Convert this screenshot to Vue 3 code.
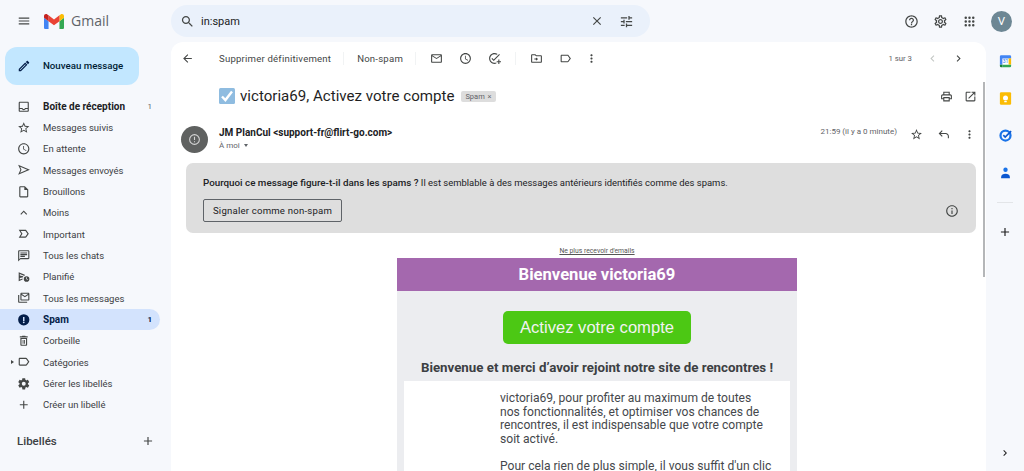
<script setup>
const icons = {
  inbox: 'M19 3H5c-1.1 0-2 .9-2 2v14c0 1.1.9 2 2 2h14c1.1 0 2-.9 2-2V5c0-1.1-.9-2-2-2zm0 16H5v-3h3.56c.69 1.19 1.97 2 3.45 2s2.75-.81 3.45-2H19v3zm0-5h-4.99c0 1.1-.9 2-2 2s-2-.9-2-2H5V5h14v9z',
  star: 'M22 9.24l-7.19-.62L12 2 9.19 8.63 2 9.24l5.46 4.73L5.82 21 12 17.27 18.18 21l-1.63-7.03L22 9.24zM12 15.4l-3.76 2.27 1-4.28-3.32-2.88 4.38-.38L12 6.1l1.71 4.04 4.38.38-3.32 2.88 1 4.28L12 15.4z',
  clock: 'M11.99 2C6.47 2 2 6.48 2 12s4.47 10 9.99 10C17.52 22 22 17.52 22 12S17.52 2 11.99 2zM12 20c-4.42 0-8-3.58-8-8s3.58-8 8-8 8 3.58 8 8-3.58 8-8 8zm.5-13H11v6l5.25 3.15.75-1.23-4.5-2.67z',
  send: 'M2 3l21 9-21 9 4-9zM5.6 6.600L8 12l-2.400 5.400L18 12z',
  draft: 'M14 2H6c-1.1 0-2 .9-2 2v16c0 1.1.9 2 2 2h12c1.1 0 2-.9 2-2V8l-6-6zm4 18H6V4h7v5h5v11z',
  less: 'M7.41 15.41L12 10.83l4.59 4.58L18 14l-6-6-6 6z',
  important: 'M15 19H3l4.5-7L3 5h12c.65 0 1.26.31 1.63.84L21 12l-4.37 6.16c-.37.52-.98.84-1.63.84zm-8.39-2H15l3.55-5L15 7H6.61l3.2 5-3.2 5z',
  chat: 'M20 2H4c-1.1 0-2 .9-2 2v18l4-4h14c1.1 0 2-.9 2-2V4c0-1.1-.9-2-2-2zm0 14H6l-2 2V4h16v12zM6 12h8v2H6zm0-3h12v2H6zm0-3h12v2H6z',
  scheduled: 'M3 4l11 4.6-.9 1.9L5 7.1v2.7l6 1.4v1.6l-6 1.4v2.7l5-2v2.1L3 20zM17 11a5 5 0 1 0 0 10 5 5 0 0 0 0-10zm-.6 2h1.2v2.6l1.8 1.1-.6 1-2.4-1.5z',
  all: 'M20 3H8c-1.1 0-2 .9-2 2v10c0 1.1.9 2 2 2h12c1.1 0 2-.9 2-2V5c0-1.1-.9-2-2-2zm0 12H8V7l6 4 6-4zm-6-6L8 5h12zM4 7H2v12c0 1.1.9 2 2 2h14v-2H4z',
  spam: 'M12 2a10 10 0 1 0 0 20 10 10 0 0 0 0-20zm-1.3 5h2.6v7h-2.6zm1.3 11.2a1.6 1.6 0 1 1 0-3.2 1.6 1.6 0 0 1 0 3.2z',
  trash: 'M6 19c0 1.1.9 2 2 2h8c1.1 0 2-.9 2-2V7H6v12zM8 9h8v10H8V9zm2 1.5h1.5v7H10zm2.5 0H14v7h-1.5zM15.5 4l-1-1h-5l-1 1H5v2h14V4z',
  label: 'M17.63 5.84C17.27 5.33 16.67 5 16 5L5 5.01C3.9 5.01 3 5.9 3 7v10c0 1.1.9 1.99 2 1.99L16 19c.67 0 1.27-.33 1.63-.84L22 12l-4.37-6.16zM16 17H5V7h11l3.55 5L16 17z',
  gear: 'M19.43 12.98c.04-.32.07-.64.07-.98 0-.34-.03-.66-.07-.98l2.11-1.65c.19-.15.24-.42.12-.64l-2-3.46c-.09-.16-.26-.25-.44-.25-.06 0-.12.01-.17.03l-2.49 1c-.52-.4-1.08-.73-1.69-.98l-.38-2.65C14.46 2.18 14.25 2 14 2h-4c-.25 0-.46.18-.49.42l-.38 2.65c-.61.25-1.17.59-1.69.98l-2.49-1c-.06-.02-.12-.03-.18-.03-.17 0-.34.09-.43.25l-2 3.46c-.13.22-.07.49.12.64l2.11 1.65c-.04.32-.07.65-.07.98 0 .33.03.66.07.98l-2.11 1.65c-.19.15-.24.42-.12.64l2 3.46c.09.16.26.25.44.25.06 0 .12-.01.17-.03l2.49-1c.52.4 1.08.73 1.69.98l.38 2.65c.03.24.24.42.49.42h4c.25 0 .46-.18.49-.42l.38-2.65c.61-.25 1.17-.59 1.69-.98l2.49 1c.06.02.12.03.18.03.17 0 .34-.09.43-.25l2-3.46c.12-.22.07-.49-.12-.64l-2.11-1.65zm-1.98-1.71c.04.31.05.52.05.73 0 .21-.02.43-.05.73l-.14 1.13.89.7 1.08.84-.7 1.21-1.27-.51-1.04-.42-.9.68c-.43.32-.84.56-1.25.73l-1.06.43-.16 1.13-.2 1.35h-1.4l-.19-1.35-.16-1.13-1.06-.43c-.43-.18-.83-.41-1.23-.71l-.91-.7-1.06.43-1.27.51-.7-1.21 1.08-.84.89-.7-.14-1.13c-.03-.31-.05-.54-.05-.74s.02-.43.05-.73l.14-1.13-.89-.7-1.08-.84.7-1.21 1.27.51 1.04.42.9-.68c.43-.32.84-.56 1.25-.73l1.06-.43.16-1.13.2-1.35h1.39l.19 1.35.16 1.13 1.06.43c.43.18.83.41 1.23.71l.91.7 1.06-.43 1.27-.51.7 1.21-1.07.85-.89.7.14 1.13zM12 8c-2.21 0-4 1.79-4 4s1.79 4 4 4 4-1.79 4-4-1.79-4-4-4zm0 6c-1.1 0-2-.9-2-2s.9-2 2-2 2 .9 2 2-.9 2-2 2z',
  gearBold: 'M19.43 12.98c.04-.32.07-.64.07-.98 0-.34-.03-.66-.07-.98l2.11-1.65c.19-.15.24-.42.12-.64l-2-3.46c-.09-.16-.26-.25-.44-.25-.06 0-.12.01-.17.03l-2.49 1c-.52-.4-1.08-.73-1.69-.98l-.38-2.65C14.46 2.18 14.25 2 14 2h-4c-.25 0-.46.18-.49.42l-.38 2.65c-.61.25-1.17.59-1.69.98l-2.49-1c-.06-.02-.12-.03-.18-.03-.17 0-.34.09-.43.25l-2 3.46c-.13.22-.07.49.12.64l2.11 1.65c-.04.32-.07.65-.07.98 0 .33.03.66.07.98l-2.11 1.65c-.19.15-.24.42-.12.64l2 3.46c.09.16.26.25.44.25.06 0 .12-.01.17-.03l2.49-1c.52.4 1.08.73 1.69.98l.38 2.65c.03.24.24.42.49.42h4c.25 0 .46-.18.49-.42l.38-2.65c.61-.25 1.17-.59 1.69-.98l2.49 1c.06.02.12.03.18.03.17 0 .34-.09.43-.25l2-3.46c.12-.22.07-.49-.12-.64l-2.11-1.65zM12 8.500a3.500 3.500 0 1 1 0 7 3.500 3.500 0 0 1 0-7z',
  add: 'M19 13h-6v6h-2v-6H5v-2h6V5h2v6h6v2z',
  menu: 'M3 18h18v-2H3v2zm0-5h18v-2H3v2zm0-7v2h18V6H3z',
  search: 'M15.5 14h-.79l-.28-.27C15.41 12.59 16 11.11 16 9.5 16 5.91 13.09 3 9.5 3S3 5.91 3 9.5 5.91 16 9.5 16c1.61 0 3.09-.59 4.23-1.57l.27.28v.79l5 4.99L20.49 19l-4.99-5zm-6 0C7.01 14 5 11.99 5 9.5S7.01 5 9.5 5 14 7.01 14 9.5 11.99 14 9.5 14z',
  close: 'M19 6.41L17.59 5 12 10.59 6.41 5 5 6.41 10.59 12 5 17.59 6.41 19 12 13.41 17.59 19 19 17.59 13.41 12z',
  tune: 'M3 17v2h6v-2H3zM3 5v2h10V5H3zm10 16v-2h8v-2h-8v-2h-2v6h2zM7 9v2H3v2h4v2h2V9H7zm14 4v-2H11v2h10zm-6-4h2V7h4V5h-4V3h-2v6z',
  help: 'M11 18h2v-2h-2v2zm1-16C6.48 2 2 6.48 2 12s4.48 10 10 10 10-4.48 10-10S17.52 2 12 2zm0 18c-4.41 0-8-3.59-8-8s3.59-8 8-8 8 3.59 8 8-3.59 8-8 8zm0-14c-2.21 0-4 1.79-4 4h2c0-1.1.9-2 2-2s2 .9 2 2c0 2-3 1.75-3 5h2c0-2.25 3-2.5 3-5 0-2.21-1.79-4-4-4z',
  apps: 'M6 4a2 2 0 1 0 0 4 2 2 0 0 0 0-4zm6 0a2 2 0 1 0 0 4 2 2 0 0 0 0-4zm6 0a2 2 0 1 0 0 4 2 2 0 0 0 0-4zM6 10a2 2 0 1 0 0 4 2 2 0 0 0 0-4zm6 0a2 2 0 1 0 0 4 2 2 0 0 0 0-4zm6 0a2 2 0 1 0 0 4 2 2 0 0 0 0-4zM6 16a2 2 0 1 0 0 4 2 2 0 0 0 0-4zm6 0a2 2 0 1 0 0 4 2 2 0 0 0 0-4zm6 0a2 2 0 1 0 0 4 2 2 0 0 0 0-4z',
  pencil: 'M14.06 9.02l.92.92L5.92 19H5v-.92l9.06-9.06M17.66 3c-.25 0-.51.1-.7.29l-1.83 1.83 3.75 3.75 1.83-1.83c.39-.39.39-1.02 0-1.41l-2.34-2.34c-.2-.2-.45-.29-.71-.29zm-3.6 3.19L3 17.25V21h3.75L17.81 9.94l-3.75-3.75z',
  back: 'M20 11H7.83l5.59-5.59L12 4l-8 8 8 8 1.41-1.41L7.83 13H20v-2z',
  mail: 'M20 4H4c-1.1 0-1.99.9-1.99 2L2 18c0 1.1.9 2 2 2h16c1.1 0 2-.9 2-2V6c0-1.1-.9-2-2-2zm0 14H4V8l8 5 8-5v10zm-8-7L4 6h16l-8 5z',
  addTask: 'M22 5.18L10.59 16.6l-4.24-4.24 1.41-1.41 2.83 2.83 10-10L22 5.18zM12 20c-4.42 0-8-3.58-8-8s3.58-8 8-8c1.58 0 3.04.46 4.28 1.25l1.44-1.44C16.1 2.67 14.13 2 12 2 6.48 2 2 6.48 2 12s4.48 10 10 10c1.2 0 2.3-.2 3.4-.6v-2.2c-1 .5-2.2.8-3.4.8zM19 14v3h-3v2h3v3h2v-3h3v-2h-3v-3z',
  move: 'M20 6h-8l-2-2H4c-1.1 0-1.99.9-1.99 2L2 18c0 1.1.9 2 2 2h16c1.1 0 2-.9 2-2V8c0-1.1-.9-2-2-2zm0 12H4V6h5.17l2 2H20v10zM11 10v2H8v2h3v2l4-3z',
  more: 'M12 8c1.1 0 2-.9 2-2s-.9-2-2-2-2 .9-2 2 .9 2 2 2zm0 2c-1.1 0-2 .9-2 2s.9 2 2 2 2-.9 2-2-.9-2-2-2zm0 6c-1.1 0-2 .9-2 2s.9 2 2 2 2-.9 2-2-.9-2-2-2z',
  prev: 'M15.41 7.41L14 6l-6 6 6 6 1.41-1.41L10.83 12z',
  next: 'M10 6L8.59 7.41 13.17 12l-4.58 4.59L10 18l6-6z',
  print: 'M19 8h-1V3H6v5H5c-1.66 0-3 1.34-3 3v6h4v4h12v-4h4v-6c0-1.66-1.34-3-3-3zM8 5h8v3H8V5zm8 12v2H8v-4h8v2zm2-2v-2H6v2H4v-4c0-.55.45-1 1-1h14c.55 0 1 .45 1 1v4h-2z',
  open: 'M19 19H5V5h7V3H5c-1.11 0-2 .9-2 2v14c0 1.1.89 2 2 2h14c1.1 0 2-.9 2-2v-7h-2v7zM14 3v2h3.59l-9.83 9.83 1.41 1.41L19 6.41V10h2V3h-7z',
  reply: 'M20 19v-4c0-2.2-1.8-4-4-4H6.83l3.58 3.59L9 16l-6-6 6-6 1.41 1.41L6.83 9H16c3.31 0 6 2.69 6 6v4h-2z',
  info: 'M11 7h2v2h-2zm0 4h2v6h-2zm1-9C6.48 2 2 6.48 2 12s4.48 10 10 10 10-4.48 10-10S17.52 2 12 2zm0 18c-4.41 0-8-3.59-8-8s3.59-8 8-8 8 3.59 8 8-3.59 8-8 8z',
  alert: 'M12 2a10 10 0 1 0 0 20 10 10 0 0 0 0-20zm0 18a8 8 0 1 1 0-16 8 8 0 0 1 0 16zm-1-13h2v6h-2zm0 8h2v2h-2z'
}

const navItems = [
  { label: 'Boîte de réception', icon: 'inbox', count: '1', bold: true, muted: true },
  { label: 'Messages suivis', icon: 'star' },
  { label: 'En attente', icon: 'clock' },
  { label: 'Messages envoyés', icon: 'send' },
  { label: 'Brouillons', icon: 'draft' },
  { label: 'Moins', icon: 'less' },
  { label: 'Important', icon: 'important' },
  { label: 'Tous les chats', icon: 'chat' },
  { label: 'Planifié', icon: 'scheduled' },
  { label: 'Tous les messages', icon: 'all' },
  { label: 'Spam', icon: 'spam', count: '1', bold: true, active: true },
  { label: 'Corbeille', icon: 'trash' },
  { label: 'Catégories', icon: 'label', caret: true },
  { label: 'Gérer les libellés', icon: 'gearBold' },
  { label: 'Créer un libellé', icon: 'add' }
]
</script>

<template>
  <div class="app">
    <header class="topbar">
      <div class="brand">
        <svg class="ic burger" viewBox="0 0 24 24"><path :d="icons.menu" /></svg>
        <svg class="logo" viewBox="52 42 88 66">
          <path fill="#4285f4" d="M58 108h14V74L52 59v43c0 3.32 2.69 6 6 6" />
          <path fill="#34a853" d="M120 108h14c3.32 0 6-2.69 6-6V59l-20 15" />
          <path fill="#fbbc04" d="M120 48v26l20-15v-8c0-7.42-8.47-11.65-14.4-7.2" />
          <path fill="#ea4335" d="M72 74V48l24 18 24-18v26L96 92" />
          <path fill="#c5221f" d="M52 51v8l20 15V48l-5.6-4.2c-5.94-4.45-14.4-.22-14.4 7.2" />
        </svg>
        <span class="wordmark">Gmail</span>
      </div>
      <div class="searchbar">
        <svg class="ic search-ic" viewBox="0 0 24 24"><path :d="icons.search" /></svg>
        <span class="query">in:spam</span>
        <svg class="ic close-ic" viewBox="0 0 24 24"><path :d="icons.close" /></svg>
        <svg class="ic tune-ic" viewBox="0 0 24 24"><path :d="icons.tune" /></svg>
      </div>
      <div class="top-actions">
        <svg class="ic" viewBox="0 0 24 24"><path :d="icons.help" /></svg>
        <svg class="ic" viewBox="0 0 24 24"><path :d="icons.gear" /></svg>
        <svg class="ic" viewBox="0 0 24 24"><path :d="icons.apps" /></svg>
        <div class="user">V</div>
      </div>
    </header>

    <div class="body">
      <aside class="sidebar">
        <button class="compose">
          <svg class="ic" viewBox="0 0 24 24"><path :d="icons.pencil" /></svg>
          <span>Nouveau message</span>
        </button>
        <nav class="nav">
          <div
            v-for="item in navItems"
            :key="item.label"
            class="nav-item"
            :class="{ bold: item.bold, active: item.active }"
          >
            <span v-if="item.caret" class="caret"></span>
            <svg class="ic" viewBox="0 0 24 24"><path :d="icons[item.icon]" /></svg>
            <span class="nav-label">{{ item.label }}</span>
            <span v-if="item.count" class="nav-count" :class="{ muted: item.muted }">{{ item.count }}</span>
          </div>
        </nav>
        <div class="labels-head">
          <span>Libellés</span>
          <svg class="ic" viewBox="0 0 24 24"><path :d="icons.add" /></svg>
        </div>
      </aside>

      <main class="card">
        <div class="scrollthumb"></div>
        <div class="toolbar">
          <svg class="ic back" viewBox="0 0 24 24"><path :d="icons.back" /></svg>
          <span class="tb-text first">Supprimer définitivement</span>
          <i class="tb-sep"></i>
          <span class="tb-text second">Non-spam</span>
          <i class="tb-sep"></i>
          <div class="tb-icons">
            <svg class="ic" viewBox="0 0 24 24"><path :d="icons.mail" /></svg>
            <svg class="ic" viewBox="0 0 24 24"><path :d="icons.clock" /></svg>
            <svg class="ic" viewBox="0 0 24 24"><path :d="icons.addTask" /></svg>
          </div>
          <i class="tb-sep"></i>
          <div class="tb-icons">
            <svg class="ic" viewBox="0 0 24 24"><path :d="icons.move" /></svg>
            <svg class="ic" viewBox="0 0 24 24"><path :d="icons.label" /></svg>
            <svg class="ic tb-more" viewBox="0 0 24 24"><path :d="icons.more" /></svg>
          </div>
          <span class="pager">1 sur 3</span>
          <svg class="ic faded" viewBox="0 0 24 24"><path :d="icons.prev" /></svg>
          <svg class="ic pager-next" viewBox="0 0 24 24"><path :d="icons.next" /></svg>
        </div>

        <div class="subject-row">
          <svg class="check" viewBox="0 0 16 16">
            <rect width="16" height="16" rx="1.5" fill="#8fbce0" />
            <path d="M3 8.5l3.4 3.6L13 3.6" fill="none" stroke="#fff" stroke-width="2.4" />
          </svg>
          <h1 class="subject">victoria69, Activez votre compte</h1>
          <span class="chip">Spam <b>×</b></span>
          <div class="subject-actions">
            <svg class="ic" viewBox="0 0 24 24"><path :d="icons.print" /></svg>
            <svg class="ic" viewBox="0 0 24 24"><path :d="icons.open" /></svg>
          </div>
        </div>

        <div class="sender-row">
          <div class="avatar">
            <svg class="ic" viewBox="0 0 24 24"><path :d="icons.alert" /></svg>
          </div>
          <div class="sender">
            <div class="from">JM PlanCul &lt;support-fr@flirt-go.com&gt;</div>
            <div class="to">À moi <i class="to-caret"></i></div>
          </div>
          <span class="time">21:59 (il y a 0 minute)</span>
          <svg class="ic star-ic" viewBox="0 0 24 24"><path :d="icons.star" /></svg>
          <svg class="ic reply-ic" viewBox="0 0 24 24"><path :d="icons.reply" /></svg>
          <svg class="ic more-ic" viewBox="0 0 24 24"><path :d="icons.more" /></svg>
        </div>

        <section class="notice">
          <p><strong>Pourquoi ce message figure-t-il dans les spams ?</strong> Il est semblable à des messages antérieurs identifiés comme des spams.</p>
          <div class="notice-foot">
            <button class="notspam">Signaler comme non-spam</button>
            <svg class="ic" viewBox="0 0 24 24"><path :d="icons.info" /></svg>
          </div>
        </section>

        <section class="mail-body">
          <a class="unsub">Ne plus recevoir d'emails</a>
          <div class="mail-head">Bienvenue victoria69</div>
          <div class="mail-grey">
            <a class="cta">Activez votre compte</a>
            <h2>Bienvenue et merci d’avoir rejoint notre site de rencontres !</h2>
            <div class="mail-white">
              <p>victoria69, pour profiter au maximum de toutes<br />nos fonctionnalités, et optimiser vos chances de<br />rencontres, il est indispensable que votre compte<br />soit activé.</p>
              <p>Pour cela rien de plus simple, il vous suffit d'un clic</p>
            </div>
          </div>
        </section>
      </main>

      <aside class="rail">
        <svg class="rail-ic" viewBox="0 0 24 24">
          <rect x="3" y="3" width="18" height="18" rx="2" fill="#fff" />
          <path d="M5 2h14a2 2 0 0 1 2 2v3H7v10H3V4a2 2 0 0 1 2-2z" fill="#4285f4" />
          <path d="M17 7h4v10h-4z" fill="#fbbc04" />
          <path d="M7 17h14v2a2 2 0 0 1-2 2H7z" fill="#34a853" />
          <path d="M3 17h4v4H5a2 2 0 0 1-2-2z" fill="#188038" />
          <text x="12" y="15" class="cal-day">31</text>
        </svg>
        <svg class="rail-ic" viewBox="0 0 24 24">
          <rect x="3" y="2" width="18" height="20" rx="2" fill="#fbbc04" />
          <circle cx="12" cy="11" r="4" fill="#fff" />
          <rect x="10" y="16" width="4" height="2" fill="#fff" />
        </svg>
        <svg class="rail-ic" viewBox="0 0 24 24">
          <circle cx="12" cy="12" r="8" fill="none" stroke="#1a73e8" stroke-width="3.6" />
          <path d="M8.5 11.5l3 3L21 5" fill="none" stroke="#0b57d0" stroke-width="2.6" />
        </svg>
        <svg class="rail-ic" viewBox="0 0 24 24">
          <circle cx="12" cy="7.500" r="3.500" fill="#1a73e8" />
          <path d="M5 19c0-3.500 3.500-5 7-5s7 1.500 7 5v2H5z" fill="#0b57d0" />
        </svg>
        <i class="rail-sep"></i>
        <svg class="ic rail-add" viewBox="0 0 24 24"><path :d="icons.add" /></svg>
        <svg class="ic rail-next" viewBox="0 0 24 24"><path :d="icons.next" /></svg>
      </aside>
    </div>
  </div>
</template>

<style>
html,
body {
  margin: 0;
  background: #f6f8fc;
  overflow: hidden;
}
</style>

<style scoped>
.app {
  width: 1024px;
  height: 471px;
  overflow: hidden;
  background: #f6f8fc;
  font-family: Roboto, "Liberation Sans", sans-serif;
  color: #202124;
}

.ic {
  display: block;
  width: 14px;
  height: 14px;
  flex: none;
  fill: #444746;
}

/* Barre du haut */
.topbar {
  display: flex;
  align-items: center;
  height: 42px;
}
.brand {
  display: flex;
  align-items: center;
  width: 171px;
  flex: none;
  box-sizing: border-box;
  padding-left: 17px;
}
.burger {
  margin-right: 13px;
}
.logo {
  width: 20px;
  height: 15px;
}
.wordmark {
  margin: 0 0 2px 7px;
  font-family: "Open Sans", sans-serif;
  font-size: 14px;
  color: #5f6368;
}
.searchbar {
  display: flex;
  align-items: center;
  width: 479px;
  height: 32px;
  box-sizing: border-box;
  padding: 0 16px 0 9px;
  background: #eaf1fb;
  border-radius: 16px;
}
.search-ic {
  width: 15px;
  height: 15px;
}
.query {
  flex: 1;
  margin-left: 6px;
  font-size: 11px;
}
.close-ic {
  margin-right: 15px;
}
.tune-ic {
  width: 15px;
  height: 15px;
}
.top-actions {
  display: flex;
  align-items: center;
  gap: 14px;
  margin-left: auto;
  padding-right: 12px;
}
.top-actions .ic {
  width: 15px;
  height: 15px;
}
.user {
  width: 21px;
  height: 21px;
  border-radius: 50%;
  background: #6d8794;
  color: #fff;
  font-size: 11.5px;
  line-height: 21px;
  text-align: center;
}

.body {
  display: flex;
  height: 429px;
}

/* Colonne de gauche */
.sidebar {
  width: 171px;
  flex: none;
}
.compose {
  display: flex;
  align-items: center;
  width: 134px;
  height: 38px;
  margin: 5px 0 0 5px;
  padding: 0 0 0 12px;
  border: none;
  border-radius: 12px;
  background: #c2e7ff;
  font-family: inherit;
  font-size: 9.7px;
  font-weight: 500;
  color: #001d35;
}
.compose span {
  margin: 0 0 1px 12px;
}
.compose .ic {
  fill: #041e49;
}
.nav {
  margin-top: 10.6px;
}
.nav-item {
  position: relative;
  display: flex;
  align-items: center;
  width: 160px;
  height: 21.33px;
  box-sizing: border-box;
  padding: 0 7px 0 17px;
  border-radius: 0 11px 11px 0;
  font-size: 9.5px;
  color: #3c4043;
}
.nav-item .ic {
  width: 13.5px;
  height: 13.5px;
}
.nav-item.bold {
  font-size: 10px;
  font-weight: 700;
  color: #202124;
}
.nav-item.active {
  background: #d3e3fd;
  color: #041e49;
}
.nav-item.active .ic {
  fill: #041e49;
}
.nav-label {
  flex: 1;
  margin-left: 12.500px;
}
.nav-count {
  font-size: 8px;
  margin-right: 1px;
}
.nav-count.muted {
  font-weight: 400;
  color: #5f6368;
}
.caret {
  position: absolute;
  left: 11px;
  top: 8px;
  border-left: 3px solid #444746;
  border-top: 2.5px solid transparent;
  border-bottom: 2.5px solid transparent;
}
.labels-head {
  display: flex;
  align-items: center;
  justify-content: space-between;
  width: 138px;
  margin: 18.4px 0 0 17px;
  font-size: 11.5px;
  font-weight: 500;
  color: #3c4043;
}

/* Carte centrale */
.card {
  position: relative;
  width: 815px;
  flex: none;
  background: #fff;
  border-radius: 12px 12px 0 0;
  overflow: hidden;
}
.scrollthumb {
  position: absolute;
  top: 40px;
  right: 1px;
  width: 2px;
  height: 195px;
  background: #b4b6b8;
}
.toolbar {
  display: flex;
  align-items: center;
  height: 33px;
  padding-left: 10px;
}
.toolbar .ic {
  width: 13px;
  height: 13px;
}
.tb-text {
  font-size: 9.6px;
  letter-spacing: 0.2px;
  color: #444746;
  margin: 0 12px;
}
.tb-text.first {
  margin-left: 25px;
}
.tb-text.second {
  margin-left: 13px;
}
.tb-sep {
  width: 1px;
  height: 13px;
  background: #f1f3f4;
}
.tb-icons {
  display: flex;
  gap: 16px;
  margin: 0 14px;
}
.toolbar .tb-more {
  margin-left: -3px;
}
.pager {
  margin-left: auto;
  margin-right: 14px;
  font-size: 7.8px;
  color: #5f6368;
}
.toolbar .faded {
  fill: #c4c7c5;
  margin-right: 13px;
}
.toolbar .pager-next {
  margin-right: 21px;
}
.subject-row {
  display: flex;
  align-items: center;
  height: 26px;
  margin-top: 8px;
  padding: 0 9px 0 48px;
}
.check {
  width: 16px;
  height: 16px;
  flex: none;
}
.subject {
  margin: 0 0 0 5px;
  font-family: Roboto, sans-serif;
  font-size: 15.1px;
  font-weight: 400;
  color: #1f1f1f;
}
.chip {
  margin-left: 7px;
  padding: 1px 4px;
  background: #dddddd;
  border-radius: 2px;
  font-size: 7.5px;
  color: #5f6368;
}
.chip b {
  font-weight: 400;
  margin-left: 1px;
}
.subject-actions {
  display: flex;
  gap: 11px;
  margin-left: auto;
}
.subject-actions .ic {
  width: 13px;
  height: 13px;
}
.sender-row {
  display: flex;
  align-items: flex-start;
  height: 37px;
  margin-top: 17px;
  padding-left: 10px;
}
.avatar {
  display: flex;
  align-items: center;
  justify-content: center;
  width: 27px;
  height: 27px;
  border-radius: 50%;
  background: #5f6160;
}
.avatar .ic {
  fill: #d4d4d4;
  width: 13px;
  height: 13px;
}
.sender {
  margin-left: 11px;
  flex: 1;
}
.from {
  font-size: 10px;
  font-weight: 700;
  line-height: 13px;
  color: #202124;
}
.to {
  display: flex;
  align-items: center;
  gap: 4px;
  font-size: 8px;
  line-height: 13px;
  color: #5f6368;
}
.to-caret {
  border-top: 3px solid #5f6368;
  border-left: 2.5px solid transparent;
  border-right: 2.5px solid transparent;
}
.time {
  margin-top: 1px;
  font-size: 8px;
  color: #5f6368;
}
.sender-row .ic {
  width: 13px;
  height: 13px;
  margin-top: 2px;
}
.sender-row .avatar .ic {
  margin-top: 0;
}
.star-ic {
  margin-left: 13px;
}
.reply-ic {
  margin-left: 14px;
}
.more-ic {
  margin-left: 13px;
  margin-right: 10px;
}
.notice {
  box-sizing: border-box;
  width: 790px;
  height: 70px;
  margin: 0 0 0 15px;
  padding: 14px 17px 0;
  background: #dedede;
  border-radius: 7px;
}
.notice p {
  margin: 0;
  font-size: 9.45px;
  line-height: 12px;
  color: #202124;
}
.notice strong {
  font-size: 9.8px;
  font-weight: 500;
}
.notice-foot {
  display: flex;
  align-items: center;
  justify-content: space-between;
  margin-top: 10px;
}
.notspam {
  width: 139px;
  height: 23px;
  padding: 0;
  background: transparent;
  border: 1px solid #5f6368;
  border-radius: 2px;
  font-family: inherit;
  font-size: 9.6px;
  letter-spacing: 0.2px;
  color: #202124;
}

/* Contenu du mail */
.mail-body {
  width: 400px;
  margin-left: 226px;
  padding-top: 14px;
}
.unsub {
  display: block;
  height: 11px;
  font-size: 6.800px;
  line-height: 9px;
  text-align: center;
  text-decoration: underline;
  color: #555;
}
.mail-head {
  height: 33px;
  background: #a468ae;
  color: #fff;
  font-size: 16.6px;
  font-weight: 700;
  line-height: 33px;
  text-align: center;
}
.mail-grey {
  padding: 20px 7px 0;
  background: #ecedf0;
}
.cta {
  display: block;
  width: 188px;
  height: 33px;
  margin: 0 auto;
  border-radius: 5px;
  background: #4cc814;
  color: #f2f2f2;
  font-family: "Liberation Sans", sans-serif;
  font-size: 16.6px;
  line-height: 33px;
  text-align: center;
}
.mail-grey h2 {
  margin: 16px 0 5px;
  font-size: 13.3px;
  font-weight: 700;
  line-height: 16px;
  text-align: center;
  color: #3c4043;
}
.mail-white {
  height: 120px;
  padding: 11px 0 0 96px;
  background: #fff;
}
.mail-white p {
  margin: 0 0 13.500px;
  font-size: 12.1px;
  line-height: 13.500px;
  color: #45484c;
}

/* Barre de droite */
.rail {
  display: flex;
  flex-direction: column;
  align-items: center;
  flex: 1;
  padding-top: 12px;
}
.rail-ic {
  width: 15px;
  height: 15px;
  margin-bottom: 22px;
}
.cal-day {
  font-size: 8px;
  text-anchor: middle;
  fill: #1a73e8;
  font-family: Roboto, sans-serif;
}
.rail-sep {
  width: 16px;
  height: 1px;
  background: #e3e5e8;
}
.rail-add {
  margin-top: 22px;
  fill: #1f1f1f;
}
.rail-next {
  margin-top: auto;
  margin-bottom: 12px;
  width: 12px;
  height: 12px;
  fill: #1f1f1f;
}
</style>
